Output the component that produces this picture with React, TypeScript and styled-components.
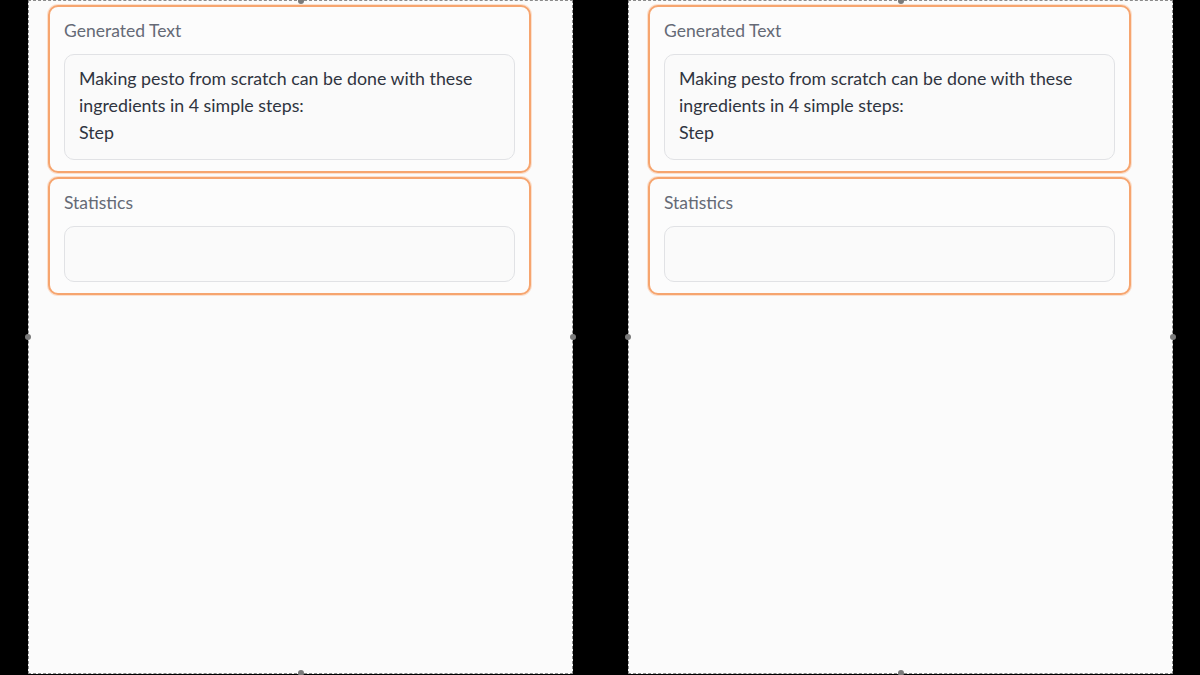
import styled, { createGlobalStyle } from "styled-components";

const GlobalStyle = createGlobalStyle`
    html, body {
        margin: 0;
        padding: 0;
        background: #000;
    }
`;

const Stage = styled.div`
    display: flex;
    gap: 55px;
    width: 1200px;
    height: 675px;
    padding-left: 28px;
    box-sizing: border-box;
    background: #000;
    font-family: Lato, "Liberation Sans", sans-serif;
`;

const Panel = styled.section`
    position: relative;
    width: 545px;
    height: 674px;
    box-sizing: border-box;
    background: #fbfbfb;
    border: 1px dashed #8a8a8a;
    padding: 4px 41px 4px 19px;
    display: flex;
    flex-direction: column;
    gap: 4px;
`;

// resize handles sit on the dashed frame
const Handle = styled.span<{ $x: string; $y: string }>`
    position: absolute;
    left: ${(p) => p.$x};
    top: ${(p) => p.$y};
    width: 6px;
    height: 6px;
    margin: -3px 0 0 -3px;
    border-radius: 50%;
    background: #7a7a7a;
`;

const Card = styled.div`
    border: 2px solid #f6a56f;
    border-radius: 10px;
    box-shadow: 0 0 0 1px rgba(250, 190, 150, 0.45);
    padding: 12px 14px 11px;
    background: #fcfcfc;
`;

const Label = styled.div`
    font-size: 17.5px;
    line-height: 23px;
    color: #656a76;
    margin-bottom: 12px;
`;

const Box = styled.div<{ $h: number }>`
    height: ${(p) => p.$h}px;
    box-sizing: border-box;
    border: 1px solid #e1e2e5;
    border-radius: 10px;
    background: #fafafa;
    padding: 10px 14px;
    font-size: 17.8px;
    line-height: 27px;
    color: #2f3440;
`;

function Column() {
    return (
        <Panel>
            <Handle $x="50%" $y="0px" />
            <Handle $x="-1px" $y="50%" />
            <Handle $x="calc(100% + 1px)" $y="50%" />
            <Handle $x="50%" $y="100%" />

            <Card>
                <Label>Generated Text</Label>
                <Box $h={106}>
                    Making pesto from scratch can be done with these ingredients in 4 simple steps:
                    <br />
                    Step
                </Box>
            </Card>

            <Card>
                <Label>Statistics</Label>
                <Box $h={56} />
            </Card>
        </Panel>
    );
}

export default function App() {
    return (
        <>
            <GlobalStyle />
            <Stage>
                <Column />
                <Column />
            </Stage>
        </>
    );
}
